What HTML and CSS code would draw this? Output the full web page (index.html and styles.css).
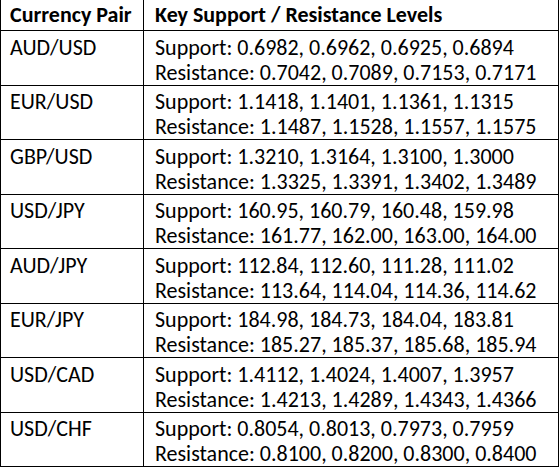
FILE: index.html
```html
<!DOCTYPE html>
<html>
<head>
<meta charset="utf-8">
<link rel="stylesheet" href="styles.css">
</head>
<body>
<table class="levels">
  <colgroup><col class="col-pair"><col class="col-vals"></colgroup>
  <thead>
    <tr><th class="pair">Currency Pair</th><th class="vals">Key Support / Resistance Levels</th></tr>
  </thead>
  <tbody>
    <tr><td class="pair">AUD/USD</td><td class="vals">Support: 0.6982, 0.6962, 0.6925, 0.6894<br>Resistance: 0.7042, 0.7089, 0.7153, 0.7171</td></tr>
    <tr><td class="pair">EUR/USD</td><td class="vals">Support: 1.1418, 1.1401, 1.1361, 1.1315<br>Resistance: 1.1487, 1.1528, 1.1557, 1.1575</td></tr>
    <tr><td class="pair">GBP/USD</td><td class="vals">Support: 1.3210, 1.3164, 1.3100, 1.3000<br>Resistance: 1.3325, 1.3391, 1.3402, 1.3489</td></tr>
    <tr><td class="pair">USD/JPY</td><td class="vals">Support: 160.95, 160.79, 160.48, 159.98<br>Resistance: 161.77, 162.00, 163.00, 164.00</td></tr>
    <tr><td class="pair">AUD/JPY</td><td class="vals">Support: 112.84, 112.60, 111.28, 111.02<br>Resistance: 113.64, 114.04, 114.36, 114.62</td></tr>
    <tr><td class="pair">EUR/JPY</td><td class="vals">Support: 184.98, 184.73, 184.04, 183.81<br>Resistance: 185.27, 185.37, 185.68, 185.94</td></tr>
    <tr><td class="pair">USD/CAD</td><td class="vals">Support: 1.4112, 1.4024, 1.4007, 1.3957<br>Resistance: 1.4213, 1.4289, 1.4343, 1.4366</td></tr>
    <tr><td class="pair">USD/CHF</td><td class="vals">Support: 0.8054, 0.8013, 0.7973, 0.7959<br>Resistance: 0.8100, 0.8200, 0.8300, 0.8400</td></tr>
  </tbody>
</table>
</body>
</html>
```
FILE: styles.css
```css
html, body {
  margin: 0;
  padding: 0;
  background: #fff;
}
.levels {
  border-collapse: collapse;
  table-layout: fixed;
  width: 558px;
  font-family: Carlito, Calibri, Lato, sans-serif;
  font-size: 22px;
  color: #000;
}
.col-pair { width: 143px; }
.col-vals { width: 415px; }
.levels th, .levels td {
  border: 1px solid #000;
  text-align: left;
  vertical-align: top;
  white-space: nowrap;
  padding: 0 0 0 9px;
}
.levels th {
  border-top: none;
  font-weight: bold;
  height: 30px;
  line-height: 30px;
  padding-top: 0;
  padding-bottom: 0;
}
.levels td {
  line-height: 25px;
  padding-top: 3.5px;
  padding-bottom: 0;
}
.levels .vals {
  padding-left: 11px;
}
```
